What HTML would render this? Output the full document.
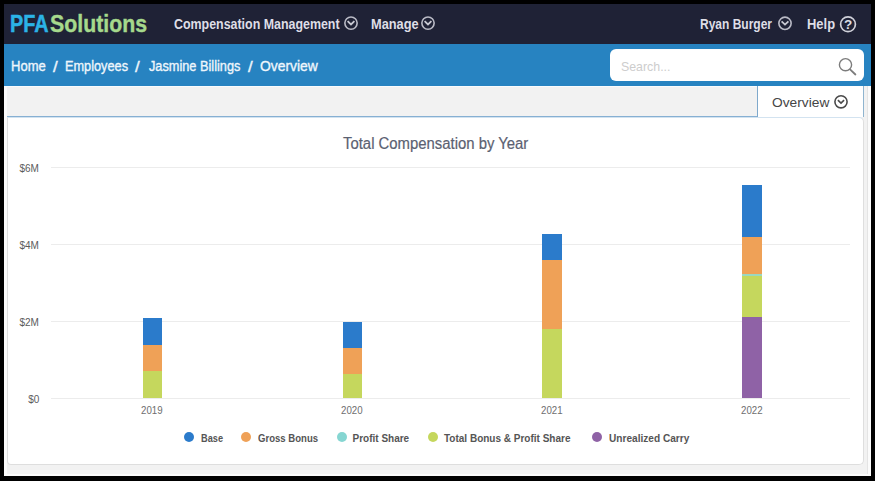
<!DOCTYPE html>
<html><head><meta charset="utf-8">
<style>
html,body{margin:0;padding:0;}
body{width:875px;height:481px;background:#000;position:relative;overflow:hidden;font-family:"Liberation Sans",sans-serif;}
.abs{position:absolute;}
.t{position:absolute;white-space:nowrap;line-height:1;transform-origin:0 0;}
#page{left:4px;top:4px;width:867px;height:472px;background:#fbfbfb;}
#inner{left:7px;top:86px;width:860px;height:388px;background:#f2f2f2;border-right:1px solid #e4e4e4;}
#nav{left:4px;top:4px;width:867px;height:40px;background:#1f2236;}
#crumb{left:4px;top:44px;width:867px;height:42px;background:#2783c1;}
#search{left:610px;top:49.2px;width:254px;height:32.3px;background:#fff;border-radius:6px;}
#tabline{left:7px;top:116px;width:751px;height:1px;background:#87b0d3;}
#tab{left:757px;top:86px;width:105px;height:31px;background:#fff;border-left:1px solid #7fa9cc;border-right:1px solid #8fb4cf;}
#card{left:7px;top:117px;width:855px;height:345.5px;background:#fff;border:1px solid #dedede;border-top-color:#d3e3f0;border-radius:0 5px 5px 4px;}
.nv{color:#dedee6;font-size:14px;font-weight:bold;top:16.9px;}
.bc{color:#eef6fc;font-size:14px;top:58.6px;-webkit-text-stroke:0.35px #eef6fc;}
.grid{position:absolute;left:51px;width:799px;height:1px;background:#ececec;}
.yl{color:#5c5c5c;font-size:10px;}
.xl{color:#6e6e6e;font-size:10px;top:405.5px;}
.lg{color:#555;font-size:10px;font-weight:bold;top:433.7px;}
.dot{position:absolute;width:10px;height:10px;border-radius:50%;top:431.7px;}
.bar{position:absolute;width:19.5px;}
</style></head>
<body>
<div id="page" class="abs"></div>
<div id="inner" class="abs"></div>
<div id="nav" class="abs"></div>
<div id="crumb" class="abs"></div>
<div id="search" class="abs"></div>
<div class="abs" style="left:7px;top:86px;width:750px;height:1px;background:#f9fbfd"></div>
<div id="tabline" class="abs"></div>
<div id="tab" class="abs"></div>
<div id="card" class="abs"></div>

<!-- logo -->
<span class="t" style="left:9.8px;top:12px;font-size:24px;font-weight:bold;color:#2bb3e6;-webkit-text-stroke:0.5px #2bb3e6;transform:scaleX(0.825)">PFA</span>
<span class="t" style="left:50.3px;top:12px;font-size:24px;font-weight:bold;color:#a6d98c;-webkit-text-stroke:0.4px #a6d98c;transform:scaleX(0.888)">Solutions</span>

<!-- nav items -->
<span class="t nv" style="left:173.5px;transform:scaleX(0.887)">Compensation Management</span>
<svg class="abs" style="left:343px;top:16px" width="16" height="16" viewBox="0 0 16 16"><circle cx="8" cy="7.1" r="6.15" fill="none" stroke="#babbc6" stroke-width="1.6"/><path d="M4.6 5.1 L8 8.4 L11.4 5.1" fill="none" stroke="#c9cad3" stroke-width="1.8"/></svg>
<span class="t nv" style="left:370.5px;transform:scaleX(0.914)">Manage</span>
<svg class="abs" style="left:420px;top:16px" width="16" height="16" viewBox="0 0 16 16"><circle cx="8" cy="7.1" r="6.15" fill="none" stroke="#babbc6" stroke-width="1.6"/><path d="M4.6 5.1 L8 8.4 L11.4 5.1" fill="none" stroke="#c9cad3" stroke-width="1.8"/></svg>

<span class="t nv" style="left:700px;transform:scaleX(0.857)">Ryan Burger</span>
<svg class="abs" style="left:777px;top:16px" width="16" height="16" viewBox="0 0 16 16"><circle cx="8" cy="7.3" r="6.15" fill="none" stroke="#babbc6" stroke-width="1.6"/><path d="M4.6 5.3 L8 8.6 L11.4 5.3" fill="none" stroke="#c9cad3" stroke-width="1.8"/></svg>
<span class="t nv" style="left:806.5px;transform:scaleX(0.924)">Help</span>
<svg class="abs" style="left:838px;top:14px" width="20" height="20" viewBox="0 0 20 20"><circle cx="10" cy="10.25" r="7.4" fill="none" stroke="#d0d1da" stroke-width="1.7"/><text x="10.1" y="15.1" text-anchor="middle" font-family="Liberation Sans" font-weight="bold" font-size="13.5" fill="#dcdde4">?</text></svg>

<!-- breadcrumb -->
<span class="t bc" style="left:10.5px;transform:scaleX(0.93)">Home</span>
<span class="t bc" style="left:53.2px;top:59.6px;transform:scaleX(1.2)">/</span>
<span class="t bc" style="left:65px;transform:scaleX(0.91)">Employees</span>
<span class="t bc" style="left:135.3px;top:59.6px;transform:scaleX(1.2)">/</span>
<span class="t bc" style="left:149px;transform:scaleX(0.91)">Jasmine Billings</span>
<span class="t bc" style="left:248.3px;top:59.6px;transform:scaleX(1.2)">/</span>
<span class="t bc" style="left:259.5px;transform:scaleX(0.99)">Overview</span>

<!-- search -->
<span class="t" style="left:620.5px;top:60px;font-size:13px;color:#cdcdcd;transform:scaleX(0.95)">Search...</span>
<svg class="abs" style="left:836px;top:56px" width="22" height="22" viewBox="0 0 22 22"><circle cx="9.5" cy="8.7" r="6.1" fill="none" stroke="#7c7c7c" stroke-width="1.4"/><path d="M14.3 13.6 L19.4 18.5" stroke="#7c7c7c" stroke-width="1.8" stroke-linecap="round"/></svg>

<!-- tab -->
<span class="t" style="left:772px;top:95.9px;font-size:13.5px;color:#454545;transform:scaleX(1.02)">Overview</span>
<svg class="abs" style="left:833px;top:94px" width="16" height="16" viewBox="0 0 16 16"><circle cx="8" cy="7.8" r="6.1" fill="none" stroke="#4a4a4a" stroke-width="1.6"/><path d="M4.9 6.1 L8 9.1 L11.1 6.1" fill="none" stroke="#4a4a4a" stroke-width="1.6"/></svg>

<!-- chart title -->
<span class="t" style="left:342.5px;top:135.9px;font-size:16px;color:#5b6171;-webkit-text-stroke:0.2px #5b6171;transform:scaleX(0.93)">Total Compensation by Year</span>

<!-- grid -->
<div class="grid" style="top:167px"></div>
<div class="grid" style="top:244px"></div>
<div class="grid" style="top:321px"></div>
<div class="grid" style="top:397.5px"></div>

<span class="t yl" style="left:19.5px;top:164.3px">$6M</span>
<span class="t yl" style="left:19.5px;top:240.5px">$4M</span>
<span class="t yl" style="left:19.5px;top:317.5px">$2M</span>
<span class="t yl" style="left:28.3px;top:394.6px">$0</span>

<!-- bars -->
<div class="bar" style="left:142.5px;top:318px;height:80.0px;background:linear-gradient(to bottom,#2b7bcb 0.0px,#2b7bcb 27.0px,#efa157 27.0px,#efa157 52.8px,#c5d75d 52.8px,#c5d75d 80.0px)"></div>
<div class="bar" style="left:342.6px;top:322.3px;height:75.7px;background:linear-gradient(to bottom,#2b7bcb 0.0px,#2b7bcb 26.3px,#efa157 26.3px,#efa157 51.9px,#c5d75d 51.9px,#c5d75d 75.7px)"></div>
<div class="bar" style="left:542.1px;top:234.2px;height:163.8px;background:linear-gradient(to bottom,#2b7bcb 0.0px,#2b7bcb 25.8px,#efa157 25.8px,#efa157 95.3px,#c5d75d 95.3px,#c5d75d 163.8px)"></div>
<div class="bar" style="left:742px;top:185px;height:213.0px;background:linear-gradient(to bottom,#2b7bcb 0.0px,#2b7bcb 51.8px,#efa157 51.8px,#efa157 89.3px,#9ad8c0 89.3px,#9ad8c0 90.8px,#c5d75d 90.8px,#c5d75d 132.5px,#8f62a6 132.5px,#8f62a6 213.0px)"></div>

<span class="t xl" style="left:141px;transform:scaleX(0.97)">2019</span>
<span class="t xl" style="left:341px;transform:scaleX(0.97)">2020</span>
<span class="t xl" style="left:540.5px;transform:scaleX(0.97)">2021</span>
<span class="t xl" style="left:741px;transform:scaleX(0.97)">2022</span>

<!-- legend -->
<div class="dot" style="left:184.2px;background:#2b7bcb"></div>
<span class="t lg" style="left:200.5px;transform:scaleX(0.92)">Base</span>
<div class="dot" style="left:240.5px;background:#efa157"></div>
<span class="t lg" style="left:257.5px;transform:scaleX(0.957)">Gross Bonus</span>
<div class="dot" style="left:336.5px;background:#86d6d2"></div>
<span class="t lg" style="left:352.5px">Profit Share</span>
<div class="dot" style="left:428px;background:#c5d75d"></div>
<span class="t lg" style="left:444px">Total Bonus &amp; Profit Share</span>
<div class="dot" style="left:591.5px;background:#8f62a6"></div>
<span class="t lg" style="left:608.5px;transform:scaleX(1.01)">Unrealized Carry</span>
</body></html>
